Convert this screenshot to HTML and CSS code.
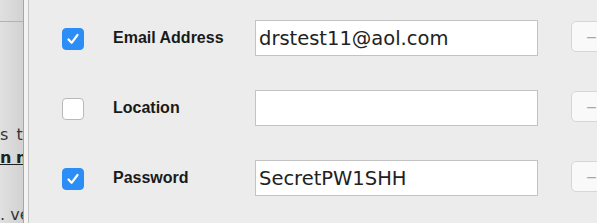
FILE: index.html
```html
<!DOCTYPE html>
<html lang="en">
<head>
    <meta charset="UTF-8">
    <meta name="viewport" content="width=device-width, initial-scale=1.0">
    <title>Account Fields</title>
    <link rel="stylesheet" href="styles.css">
</head>
<body>
    <div class="window">
        <div class="sidebar">
            <div class="sidebar-head"></div>
            <div class="sidebar-text">
                <div class="line line-one">s to</div>
                <div class="line line-two"><u>n m</u></div>
                <div class="line line-three">. ve</div>
            </div>
        </div>
        <div class="divider"></div>

        <div class="panel">
            <div class="row">
                <span class="check checked">
                    <svg viewBox="0 0 22 22" width="22" height="22"><path d="M6.5 11.5 L9.6 14.8 L15.5 7" fill="none" stroke="#fff" stroke-width="2.2" stroke-linecap="round" stroke-linejoin="round"/></svg>
                </span>
                <label class="label">Email Address</label>
                <input class="field" type="text" value="drstest11@aol.com">
                <button class="remove">&ndash;</button>
            </div>
            <div class="row">
                <span class="check"></span>
                <label class="label">Location</label>
                <input class="field" type="text" value="">
                <button class="remove">&ndash;</button>
            </div>
            <div class="row">
                <span class="check checked">
                    <svg viewBox="0 0 22 22" width="22" height="22"><path d="M6.5 11.5 L9.6 14.8 L15.5 7" fill="none" stroke="#fff" stroke-width="2.2" stroke-linecap="round" stroke-linejoin="round"/></svg>
                </span>
                <label class="label">Password</label>
                <input class="field" type="text" value="SecretPW1SHH">
                <button class="remove">&ndash;</button>
            </div>
        </div>
    </div>
</body>
</html>
```

FILE: styles.css
```css
body {
    margin: 0;
    padding: 0;
    background-color: #ececec;
    font-family: "Liberation Sans", Arial, sans-serif;
    overflow: hidden;
}
.window {
    display: flex;
    height: 223px;
    width: 597px;
    overflow: hidden;
}
.sidebar {
    width: 23px;
    flex-shrink: 0;
    overflow: hidden;
    background: linear-gradient(to right, #e0e0e0, #d2d2d2);
    border-right: 1px solid #a6a6a6;
}
.sidebar-head {
    height: 21px;
    border-bottom: 1px solid #b2b2b2;
}
.sidebar-text {
    font-family: "DejaVu Sans", sans-serif;
    font-size: 16px;
    line-height: 23px;
    color: #333;
    white-space: nowrap;
}
.line-one {
    margin-top: 101px;
    word-spacing: 3px;
}
.line-two {
    font-weight: bold;
    word-spacing: -1px;
    color: #222;
}
.line-three {
    margin-top: 34px;
}
.divider {
    width: 4px;
    flex-shrink: 0;
    background: #f3f3f3;
    border-right: 1px solid #c2c2c2;
}
.panel {
    flex: 1;
    padding: 20px 0 0 33px;
    display: flex;
    flex-direction: column;
    gap: 34px;
    overflow: hidden;
}
.row {
    display: flex;
    align-items: center;
    height: 36px;
    white-space: nowrap;
}
.check {
    width: 20px;
    height: 20px;
    flex-shrink: 0;
    margin-top: 2px;
    border: 1px solid #b9b9b9;
    border-radius: 4px;
    background: #fff;
    display: flex;
    align-items: center;
    justify-content: center;
}
.check.checked {
    background: #2b8ef6;
    border-color: #2b8ef6;
}
.check svg {
    display: block;
    flex-shrink: 0;
}
.label {
    width: 142px;
    margin-left: 29px;
    flex-shrink: 0;
    font-size: 16px;
    font-weight: bold;
    color: #1a1a1a;
}
.field {
    width: 283px;
    height: 36px;
    box-sizing: border-box;
    flex-shrink: 0;
    margin: 0;
    padding: 0 3px;
    border: 1px solid #c3c3c3;
    background: #fff;
    font-family: "DejaVu Sans", sans-serif;
    font-size: 19.5px;
    color: #222;
    outline: none;
}
.remove {
    width: 60px;
    height: 31px;
    flex-shrink: 0;
    align-self: flex-start;
    margin: 1px 0 0 33px;
    padding: 0 0 0 15px;
    text-align: left;
    border: 1px solid #d6d6d6;
    border-radius: 5px;
    background: #f9f9f9;
    color: #a8a8a8;
    font-family: "Liberation Sans", Arial, sans-serif;
    font-size: 16px;
}
```
